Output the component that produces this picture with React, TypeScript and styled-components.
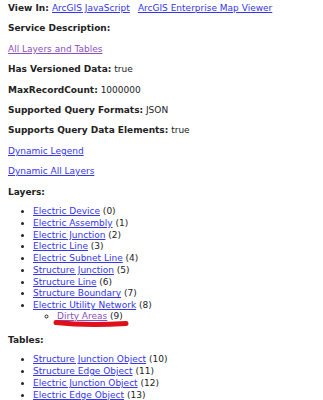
import React from 'react';
import styled, { createGlobalStyle } from 'styled-components';

const GlobalStyle = createGlobalStyle`
  html, body {
    margin: 0;
    padding: 0;
    background: #ffffff;
  }
  body {
    font-family: 'DejaVu Sans', Verdana, sans-serif;
    font-size: 9px;
    line-height: 11.8px;
    color: #222;
  }
`;

const Page = styled.div`
  padding: 3px 8px 0 8px;
  width: 323px;
  height: 400px;
  box-sizing: border-box;
  overflow: hidden;
`;

const Row = styled.div`
  margin-bottom: 8.6px;
`;

const Label = styled.b`
  font-weight: bold;
`;

const Link = styled.a<{ $visited?: boolean }>`
  color: ${(p) => (p.$visited ? '#8a4fc0' : '#3535ee')};
  text-decoration: underline;
`;

const Spacer = styled.span`
  display: inline-block;
  width: 8px;
`;

const List = styled.ul<{ $top: number; $bottom: number }>`
  margin: ${(p) => p.$top}px 0 ${(p) => p.$bottom}px 0;
  padding-left: 25px;
  list-style: disc;
`;

const SubList = styled.ul`
  margin: -1.5px 0 0 0;
  padding-left: 24px;
  list-style: circle;
`;

const Item = styled.li``;

const Marked = styled.span`
  position: relative;
`;

const Scribble = styled.svg`
  position: absolute;
  left: -3px;
  top: 9px;
  overflow: visible;
  pointer-events: none;
`;

const layers = [
  'Electric Device',
  'Electric Assembly',
  'Electric Junction',
  'Electric Line',
  'Electric Subnet Line',
  'Structure Junction',
  'Structure Line',
  'Structure Boundary',
];

const tables = [
  'Structure Junction Object',
  'Structure Edge Object',
  'Electric Junction Object',
  'Electric Edge Object',
];

const App: React.FC = () => {
  return (
    <Page>
      <GlobalStyle />
      <Row>
        <Label>View In: </Label>
        <Link href="#">ArcGIS JavaScript</Link>
        <Spacer />
        <Link href="#">ArcGIS Enterprise Map Viewer</Link>
      </Row>
      <Row>
        <Label>Service Description: </Label>
      </Row>
      <Row>
        <Link href="#" $visited>All Layers and Tables</Link>
      </Row>
      <Row>
        <Label>Has Versioned Data:</Label> true
      </Row>
      <Row>
        <Label>MaxRecordCount:</Label> 1000000
      </Row>
      <Row>
        <Label>Supported Query Formats:</Label> JSON
      </Row>
      <Row>
        <Label>Supports Query Data Elements:</Label> true
      </Row>
      <Row>
        <Link href="#">Dynamic Legend</Link>
      </Row>
      <Row>
        <Link href="#">Dynamic All Layers</Link>
      </Row>
      <Row>
        <Label>Layers:</Label>
      </Row>
      <List $top={-1} $bottom={12.5}>
        {layers.map((name, i) => (
          <Item key={name}>
            <Link href="#">{name}</Link> ({i})
          </Item>
        ))}
        <Item>
          <Link href="#">Electric Utility Network</Link> (8)
          <SubList>
            <Item>
              <Marked>
                <Link href="#" $visited>Dirty Areas</Link> (9)
                <Scribble width="75" height="8" viewBox="0 0 75 8">
                  <path
                    d="M2 2.5 C 20 4.5, 44 5, 72 3.5"
                    stroke="#e0101a"
                    strokeWidth="5"
                    strokeLinecap="round"
                    fill="none"
                  />
                </Scribble>
              </Marked>
            </Item>
          </SubList>
        </Item>
      </List>
      <Row>
        <Label>Tables:</Label>
      </Row>
      <List $top={-1} $bottom={0}>
        {tables.map((name, i) => (
          <Item key={name}>
            <Link href="#">{name}</Link> ({i + 10})
          </Item>
        ))}
      </List>
    </Page>
  );
};

export default App;
